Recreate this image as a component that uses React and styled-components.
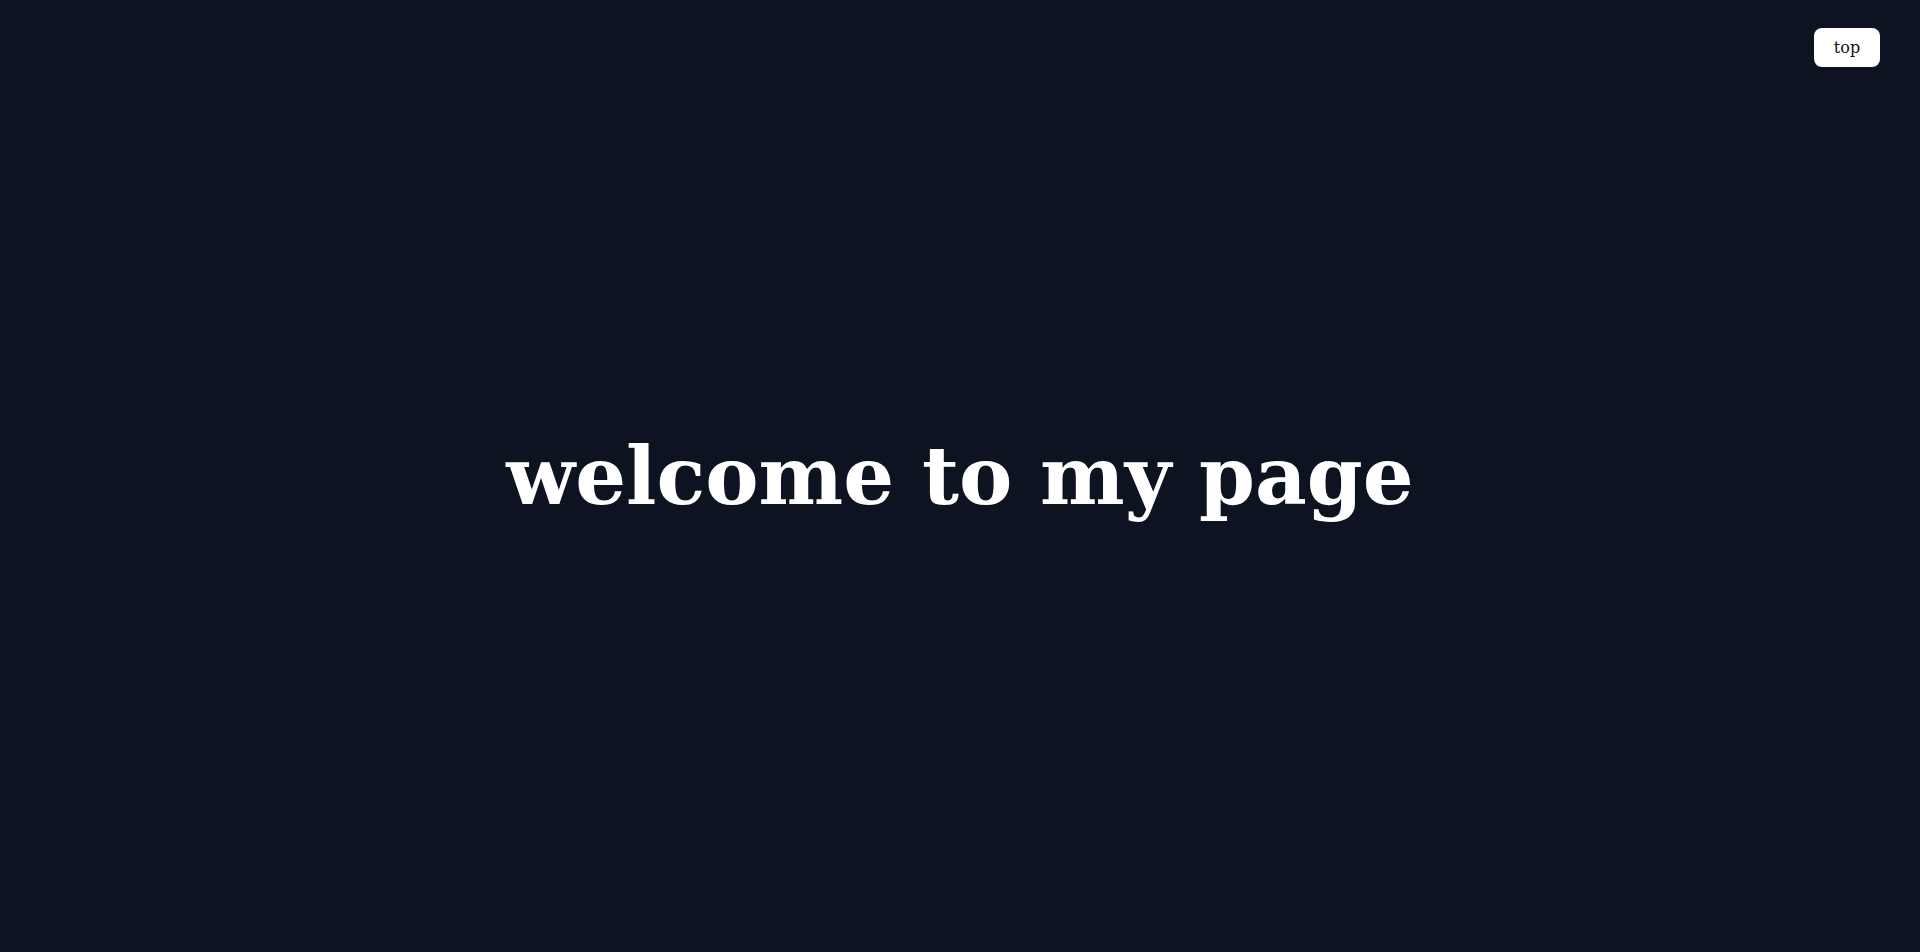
import React from 'react';
import styled, { createGlobalStyle } from 'styled-components';

const GlobalStyle = createGlobalStyle`
    html, body {
        margin: 0;
        padding: 0;
        background-color: #0d1321;
        font-family: 'DejaVu Serif', serif;
    }
`;

const Page = styled.main`
    position: relative;
    min-height: 100vh;
    display: flex;
    align-items: center;
    justify-content: center;
    background-color: #0d1321;
`;

const TopButton = styled.button`
    position: absolute;
    top: 28px;
    right: 40px;
    width: 66px;
    height: 39px;
    border: none;
    border-radius: 8px;
    background-color: #fff;
    color: #111;
    font-family: 'DejaVu Serif', serif;
    font-size: 16px;
    cursor: pointer;
`;

const Heading = styled.h1`
    margin: 0;
    color: #fff;
    font-family: 'DejaVu Serif', serif;
    font-weight: bold;
    font-size: 80px;
`;

const App = () => {
    return (
        <>
            <GlobalStyle />
            <Page>
                <TopButton>top</TopButton>
                <Heading>welcome to my page</Heading>
            </Page>
        </>
    );
};

export default App;
